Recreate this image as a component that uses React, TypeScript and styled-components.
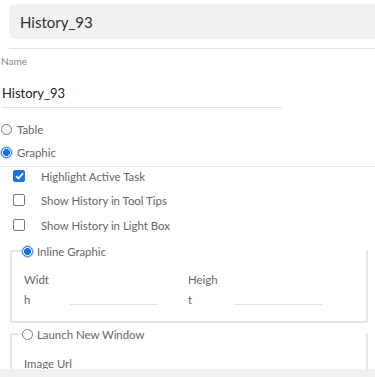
import React from "react";
import styled, { createGlobalStyle } from "styled-components";

const Global = createGlobalStyle`
  html, body { margin: 0; padding: 0; background: #fff; overflow: hidden; }
  body { font-family: Lato, "Open Sans", sans-serif; width: 375px; height: 377px; }
`;

const Page = styled.div`
  width: 375px;
  height: 377px;
  position: relative;
  overflow: hidden;
  display: flex;
  flex-direction: column;
  & > * { flex-shrink: 0; }
`;

const Header = styled.div`
  margin: 4px 0 0 9px;
  height: 35px;
  background: #f1f1f1;
  border-radius: 6px 0 0 6px;
  display: flex;
  align-items: center;
  padding-left: 11px;
  font-size: 15px;
  color: #333;
`;

const Rule = styled.div<{ $left?: number; $top?: number }>`
  height: 1px;
  background: #e2e2e2;
  margin-left: ${(p) => p.$left ?? 0}px;
  margin-top: ${(p) => p.$top ?? 0}px;
`;

const FieldLabel = styled.div`
  font-size: 10px;
  color: #888;
  margin: 6px 0 0 1px;
  height: 13px;
`;

const NameValue = styled.div`
  width: 280px;
  margin: 17px 0 0 2px;
  padding-bottom: 6px;
  border-bottom: 1px solid #e2e2e2;
  font-size: 13px;
  color: #222;
`;

const RadioRow = styled.label<{ $top: number; $left?: number }>`
  display: flex;
  align-items: center;
  gap: 5px;
  margin-top: ${(p) => p.$top}px;
  margin-left: ${(p) => p.$left ?? 1}px;
  font-size: 11.4px;
  color: #666;
  height: 14px;
`;

const RadioDot = styled.span<{ $on?: boolean }>`
  width: 11px;
  height: 11px;
  border-radius: 50%;
  box-sizing: border-box;
  border: 1px solid ${(p) => (p.$on ? "#1a73e8" : "#777")};
  background: ${(p) => (p.$on ? "radial-gradient(circle, #1a6fe8 0 3.2px, #fff 3.8px)" : "#fff")};
  box-shadow: ${(p) => (p.$on ? "0 0 0 1px #b9d3f7" : "none")};
  flex: none;
`;

const CheckRow = styled.label<{ $top: number }>`
  display: flex;
  align-items: center;
  margin-top: ${(p) => p.$top}px;
  margin-left: 13px;
  font-size: 11.4px;
  color: #666;
  height: 14px;
`;

const Box = styled.span<{ $on?: boolean }>`
  width: 12px;
  height: 12px;
  box-sizing: border-box;
  border-radius: 2px;
  border: 1px solid ${(p) => (p.$on ? "#1a73e8" : "#777")};
  background: ${(p) => (p.$on ? "#1a73e8" : "#fff")};
  display: flex;
  align-items: center;
  justify-content: center;
  margin-right: 16px;
  flex: none;
`;

const Fieldset = styled.fieldset<{ $top: number; $h: number }>`
  margin: ${(p) => p.$top}px 0 0 10px;
  width: 357px;
  height: ${(p) => p.$h}px;
  box-sizing: border-box;
  border: 2px solid #e6e6e6;
  border-radius: 2px;
  padding: 0 0 0 12px;
  position: relative;
`;

const Legend = styled.legend`
  padding: 0;
  margin-left: -2px;
  width: 344px;
  height: 14px;
  display: flex;
  align-items: center;
  gap: 4px;
  font-size: 11.4px;
  color: #666;
`;

const LegendText = styled.span`
  background: #fff;
  padding-right: 4px;
`;

const DimRow = styled.div`
  display: flex;
  margin-top: 12px;
`;

const Dim = styled.div<{ $w: number }>`
  width: ${(p) => p.$w}px;
  display: flex;
  align-items: flex-end;
`;

const DimLabel = styled.div`
  width: 46px;
  font-size: 11.4px;
  line-height: 20px;
  color: #666;
`;

const DimInput = styled.div`
  width: 88px;
  height: 1px;
  background: #e2e2e2;
  margin-bottom: 5px;
`;

const SubLabel = styled.div`
  font-size: 11.4px;
  color: #666;
  margin-top: 16px;
`;

const Footer = styled.div`
  position: absolute;
  left: 0;
  right: 0;
  bottom: 0;
  height: 8px;
  background: #f0f0f0;
`;

export default function App() {
  return (
    <Page>
      <Global />
      <Header>History_93</Header>
      <Rule $left={9} $top={9} />
      <FieldLabel>Name</FieldLabel>
      <NameValue>History_93</NameValue>
      <RadioRow $top={14}>
        <RadioDot />
        Table
      </RadioRow>
      <RadioRow $top={9}>
        <RadioDot $on />
        Graphic
      </RadioRow>
      <Rule $top={7} />
      <CheckRow $top={2}>
        <Box $on>
          <svg width="9" height="8" viewBox="0 0 9 8">
            <path d="M1 4.2 L3.4 6.5 L8 1.2" stroke="#fff" strokeWidth="1.7" fill="none" />
          </svg>
        </Box>
        Highlight Active Task
      </CheckRow>
      <CheckRow $top={10}>
        <Box />
        Show History in Tool Tips
      </CheckRow>
      <CheckRow $top={11}>
        <Box />
        Show History in Light Box
      </CheckRow>
      <Fieldset $top={12} $h={79}>
        <Legend>
          <RadioDot $on />
          <LegendText>Inline Graphic</LegendText>
        </Legend>
        <DimRow>
          <Dim $w={164}>
            <DimLabel>
              Widt
              <br />h
            </DimLabel>
            <DimInput />
          </Dim>
          <Dim $w={164}>
            <DimLabel>
              Heigh
              <br />t
            </DimLabel>
            <DimInput />
          </Dim>
        </DimRow>
      </Fieldset>
      <Fieldset $top={4} $h={60}>
        <Legend>
          <RadioDot />
          <LegendText>Launch New Window</LegendText>
        </Legend>
        <SubLabel>Image Url</SubLabel>
      </Fieldset>
      <Footer />
    </Page>
  );
}
